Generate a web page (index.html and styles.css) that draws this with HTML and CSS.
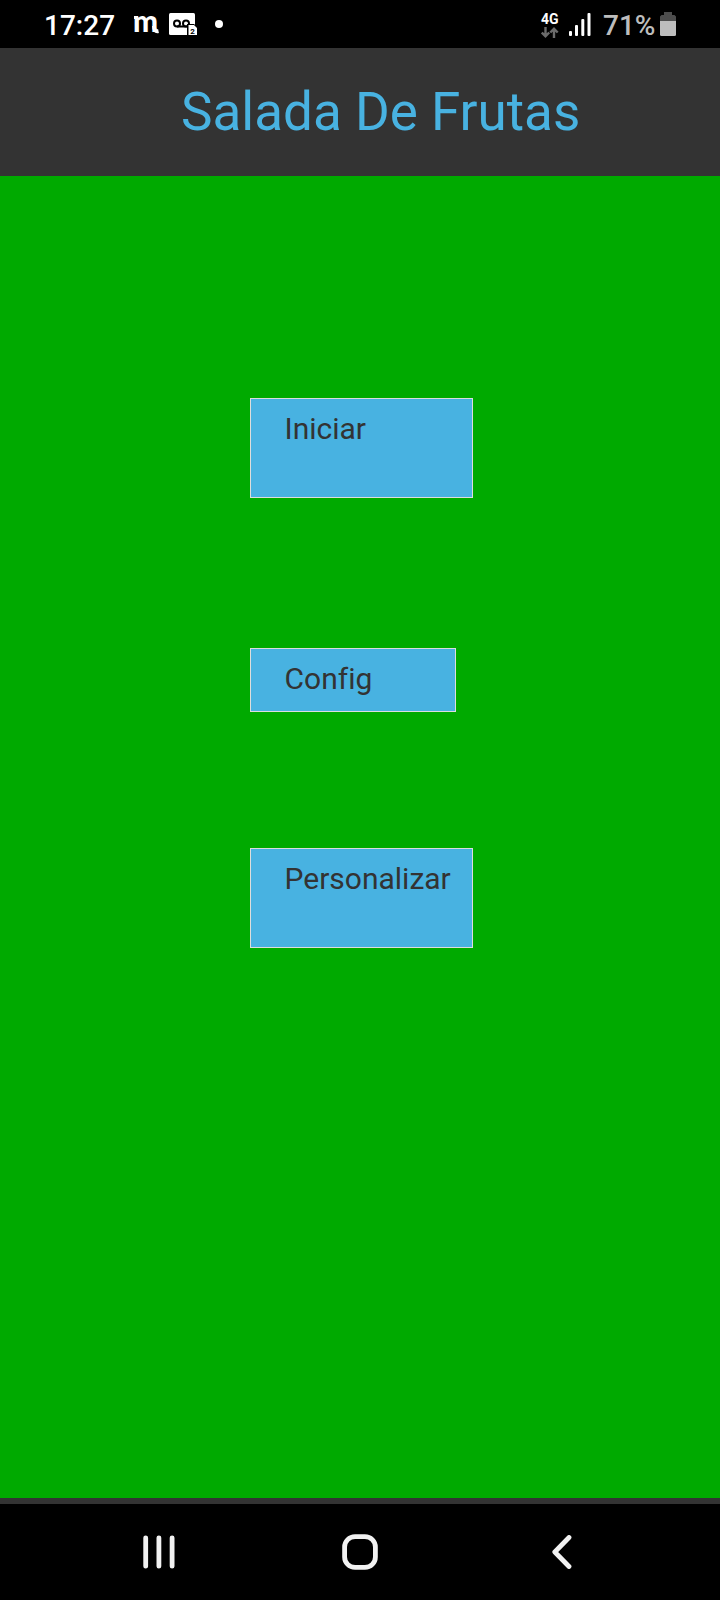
FILE: index.html
```html
<!DOCTYPE html>
<html lang="pt">
<head>
<meta charset="utf-8">
<title>Salada De Frutas</title>
<link rel="stylesheet" href="styles.css">
</head>
<body>
<div class="screen">
  <div class="status">
    <span class="time">17:27</span>
    <svg class="m-logo" width="27" height="42" viewBox="0 0 27 42">
      <text class="m-text" x="-1" y="31" textLength="25" lengthAdjust="spacingAndGlyphs">m</text>
      <path d="M0 16.500H4" fill="none" stroke="#fff" stroke-width="3"/>
      <path d="M20 25Q20 31 24.500 30" fill="none" stroke="#fff" stroke-width="4"/>
    </svg>
    <svg class="voicemail" width="29" height="24" viewBox="0 0 29 24">
      <rect width="26" height="22" rx="1.5" fill="#fff"/>
      <g fill="none" stroke="#000" stroke-width="2"><circle cx="8" cy="10.5" r="3"/><circle cx="17" cy="10.5" r="3"/><path d="M8 13.5H18"/></g>
      <path d="M18 22V11H25L29 14.5V22Z" fill="#000"/>
      <path d="M19.5 22V12H25L28 15V22Z" fill="#fff"/>
      <text class="sim" x="21.300" y="20.500">2</text>
    </svg>
    <span class="dot"></span>
    <div class="network">
      <span class="net-type">4G</span>
      <svg width="18" height="11" viewBox="0 0 18 11" fill="none" stroke="#6b6b6b" stroke-width="2.400">
        <path d="M4.500 0V9M.8 5.500L4.500 9.200L8.200 5.500M13 11V2M9.300 5.500L13 1.800L16.700 5.500"/>
      </svg>
    </div>
    <svg class="signal" width="22" height="23" viewBox="0 0 22 23" fill="#fff">
      <rect x="0" y="18" width="3" height="5" rx="1"/><rect x="6" y="12" width="3" height="11" rx="1"/><rect x="12.300" y="6" width="3" height="17" rx="1"/><rect x="18.500" y="0" width="3" height="23" rx="1"/>
    </svg>
    <span class="percent">71%</span>
    <svg class="battery" width="16" height="24" viewBox="0 0 16 24">
      <path d="M4 3V0H12V3H14.500L16 4.500V9H0V4.500L1.500 3Z" fill="#4d4d4d"/>
      <path d="M0 9H16V22.500Q16 24 14.500 24H1.500Q0 24 0 22.500Z" fill="#bdbdbd"/>
    </svg>
  </div>
  <header class="title-bar"><h1 class="title">Salada De Frutas</h1></header>
  <main class="menu">
    <button class="item tall">Iniciar</button>
    <button class="item short">Config</button>
    <button class="item tall">Personalizar</button>
  </main>
  <nav class="nav">
    <svg width="32" height="34" viewBox="0 0 32 34" fill="none" stroke="#f2f2f2" stroke-width="4.800" stroke-linecap="round"><path d="M2.700 2.800V31.200M15.900 2.800V31.200M29.100 2.800V31.200"/></svg>
    <svg class="home" width="36" height="36" viewBox="0 0 36 36" fill="none" stroke="#f2f2f2" stroke-width="4.800"><rect x="2.600" y="2.600" width="30.800" height="30.800" rx="10.500"/></svg>
    <svg class="back" width="20" height="34" viewBox="0 0 20 34" fill="none" stroke="#f2f2f2" stroke-width="4.800" stroke-linecap="round" stroke-linejoin="round"><path d="M17 2.500L2.800 17L17 31.500"/></svg>
  </nav>
</div>
</body>
</html>
```
FILE: styles.css
```css
body {
  margin: 0;
  font-family: Roboto, sans-serif;
}
.screen {
  display: flex;
  flex-direction: column;
  width: 720px;
  height: 1600px;
  background: #000;
}
.status {
  display: flex;
  align-items: flex-start;
  height: 48px;
  padding: 0 44px 0 44px;
  box-sizing: border-box;
  color: #fff;
  line-height: 1;
}
.time {
  width: 90px;
  padding-top: 12px;
  font-size: 28px;
  font-weight: 500;
}
.m-logo {
  margin: 1px 8px 0 0;
  overflow: visible;
}
.m-text {
  fill: #fff;
  font: 900 31px Lato, sans-serif;
}
.voicemail {
  margin-top: 13px;
}
.sim {
  font: bold 8px Roboto, sans-serif;
}
.dot {
  width: 8px;
  height: 8px;
  margin: 20px auto 0 17px;
  border-radius: 50%;
  background: #fff;
}
.network {
  display: flex;
  flex-direction: column;
  width: 28px;
  gap: 2px;
  padding-top: 12px;
}
.net-type {
  font-size: 14px;
  font-weight: 700;
}
.network svg {
  margin-top: -1px;
}
.signal {
  margin-top: 13px;
}
.percent {
  width: 57px;
  margin-left: 12px;
  padding-top: 12px;
  color: #bdbdbd;
  font-size: 28px;
  font-weight: 500;
}
.battery {
  margin-top: 12px;
}
.title-bar {
  height: 128px;
  padding: 33px 0 0 181px;
  box-sizing: border-box;
  background: #333;
}
.title {
  margin: 0;
  color: #48b2e1;
  font-size: 53px;
  font-weight: 400;
  line-height: 62px;
  white-space: nowrap;
}
.menu {
  display: flex;
  flex-direction: column;
  align-items: flex-start;
  height: 1328px;
  padding: 222px 0 0 250px;
  box-sizing: border-box;
  border-bottom: 6px solid #333;
  background: #00aa00;
}
.item {
  display: flex;
  align-items: flex-start;
  box-sizing: border-box;
  padding: 12px 0 0 33.500px;
  border: 1px solid #ddd;
  background: #48b2e1;
  color: #333;
  font: 400 30px/36px Roboto, sans-serif;
  font-variant-ligatures: none;
}
.tall {
  width: 223px;
  height: 100px;
}
.short {
  width: 206px;
  height: 64px;
  margin: 150px 0 136px;
}
.nav {
  display: flex;
  align-items: center;
  height: 96px;
  padding-left: 143px;
}
.home {
  margin-left: 167px;
}
.back {
  margin-left: 174px;
}
```
